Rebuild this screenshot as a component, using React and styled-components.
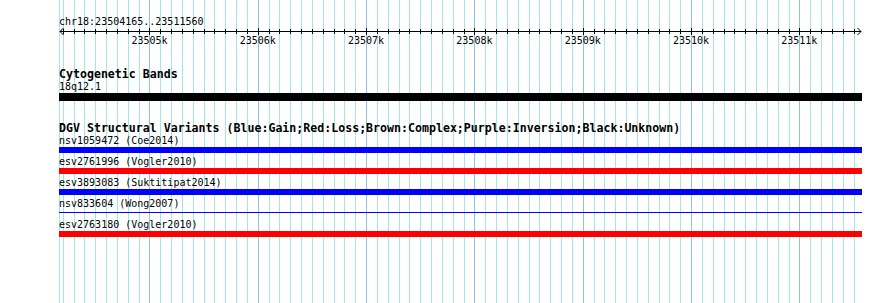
import React from "react";
import styled, { createGlobalStyle } from "styled-components";

const START = 23504165;
const END = 23511560;
const X0 = 59;
const SPAN = 801;
const PAGE_W = 890;
const PAGE_H = 303;
const toX = (bp) => X0 + (bp - START) * (SPAN / (END - START));

const minorTicks = [];
for (let bp = Math.ceil(START / 100) * 100; bp <= END; bp += 100) minorTicks.push(bp);
const majorTicks = minorTicks.filter((bp) => bp % 1000 === 0);

const GlobalStyle = createGlobalStyle`
  html, body { margin: 0; padding: 0; background: #ffffff; }
  #root { width: ${PAGE_W}px; }
`;

const Page = styled.div`
  position: relative;
  width: ${PAGE_W}px;
  height: ${PAGE_H}px;
  overflow: hidden;
  background: #ffffff;
  color: #000000;
`;

const GridLayer = styled.svg`
  position: absolute;
  top: 0;
  left: 0;
  z-index: 0;
  display: block;
`;

const Content = styled.div`
  position: relative;
  z-index: 1;
  box-sizing: border-box;
  width: ${PAGE_W}px;
  padding: 15px 28px 0 ${X0}px;
  display: flex;
  flex-direction: column;
`;

const SmallText = styled.div`
  font-family: "DejaVu Sans Mono", "Liberation Mono", monospace;
  font-size: 10px;
  line-height: 13px;
  height: 13px;
  white-space: pre;
`;

const Title = styled.div`
  font-family: "DejaVu Sans Mono", "Liberation Mono", monospace;
  font-weight: bold;
  font-size: 11.6px;
  line-height: 12px;
  height: 12px;
  white-space: pre;
  margin-top: ${(p) => p.$gap || 0}px;
`;

const Track = styled.section`
  display: flex;
  flex-direction: column;
`;

const Feature = styled.div`
  display: flex;
  flex-direction: column;
  margin-bottom: ${(p) => p.$after || 0}px;
`;

const Bar = styled.div`
  height: ${(p) => (p.$thin ? 1 : p.$h || 6)}px;
  margin: ${(p) => (p.$thin ? "2px 0 3px" : "0")};
  background: ${(p) => p.$color};
  width: 100%;
`;

const RulerSvg = styled.svg`
  display: block;
  overflow: visible;
`;

const TickLabel = styled.text`
  font-family: "DejaVu Sans Mono", "Liberation Mono", monospace;
  font-size: 10px;
`;

function Grid() {
  return (
    <GridLayer width={PAGE_W} height={PAGE_H} shapeRendering="crispEdges">
      <line x1={X0 + 0.5} x2={X0 + 0.5} y1={0} y2={PAGE_H} stroke="#a6e3ea" />
      {minorTicks.map((bp) => {
        const x = Math.round(toX(bp)) + 0.5;
        const major = bp % 1000 === 0;
        return (
          <line
            key={bp}
            x1={x}
            x2={x}
            y1={0}
            y2={PAGE_H}
            stroke={major ? "#8cc4e8" : "#a6e3ea"}
          />
        );
      })}
    </GridLayer>
  );
}

function Ruler() {
  const w = SPAN + 2;
  return (
    <RulerSvg width={w} height={19}>
      <g shapeRendering="crispEdges">
        <rect x={1} y={3} width={SPAN} height={1} fill="#000" />
        {minorTicks.map((bp) => {
          const x = Math.round(toX(bp)) - X0;
          const major = bp % 1000 === 0;
          return (
            <rect
              key={bp}
              x={x}
              y={major ? 0 : 1}
              width={1}
              height={major ? 7 : 5}
              fill="#000"
            />
          );
        })}
      </g>
      <polyline points="4.5,0 1,3.5 4.5,7" fill="none" stroke="#000" strokeWidth="1" />
      <polyline
        points={`${SPAN - 2.5},0 ${SPAN + 1},3.5 ${SPAN - 2.5},7`}
        fill="none"
        stroke="#000"
        strokeWidth="1"
      />
      {majorTicks.map((bp) => (
        <TickLabel key={bp} x={toX(bp) - X0} y={15.5} textAnchor="middle">
          {`${bp / 1000}k`}
        </TickLabel>
      ))}
    </RulerSvg>
  );
}

const variants = [
  { name: "nsv1059472 (Coe2014)", color: "#0000ff" },
  { name: "esv2761996 (Vogler2010)", color: "#ff0000" },
  { name: "esv3893083 (Suktitipat2014)", color: "#0000ff" },
  { name: "nsv833604 (Wong2007)", color: "#0000ff", thin: true },
  { name: "esv2763180 (Vogler2010)", color: "#ff0000" },
];

export default function App() {
  return (
    <Page>
      <GlobalStyle />
      <Grid />
      <Content>
        <SmallText>chr18:23504165..23511560</SmallText>
        <Ruler />

        <Track>
          <Title $gap={21}>Cytogenetic Bands</Title>
          <Feature>
            <SmallText>18q12.1</SmallText>
            <Bar $color="#000000" $h={8} />
          </Feature>
        </Track>

        <Track>
          <Title $gap={21}>
            DGV Structural Variants (Blue:Gain;Red:Loss;Brown:Complex;Purple:Inversion;Black:Unknown)
          </Title>
          {variants.map((v) => (
            <Feature key={v.name} $after={2}>
              <SmallText>{v.name}</SmallText>
              <Bar $color={v.color} $thin={v.thin} />
            </Feature>
          ))}
        </Track>
      </Content>
    </Page>
  );
}
